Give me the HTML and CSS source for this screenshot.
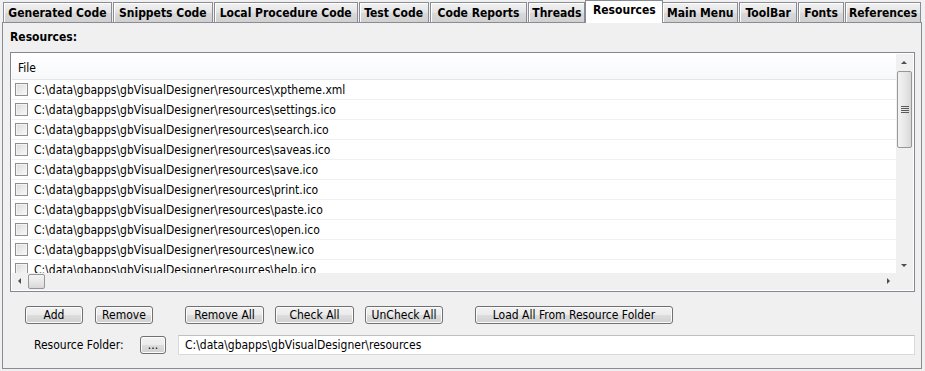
FILE: index.html
```html
<!DOCTYPE html>
<html>
<head>
<meta charset="utf-8">
<link rel="stylesheet" href="styles.css">
</head>
<body>
<div class="window">
  <div class="tabs">
    <div class="tab t1">Generated Code</div>
    <div class="tab t2">Snippets Code</div>
    <div class="tab t3">Local Procedure Code</div>
    <div class="tab t4">Test Code</div>
    <div class="tab t5">Code Reports</div>
    <div class="tab t6">Threads</div>
    <div class="tab active t7">Resources</div>
    <div class="tab t8">Main Menu</div>
    <div class="tab t9">ToolBar</div>
    <div class="tab t10">Fonts</div>
    <div class="tab t11">References</div>
  </div>
  <div class="panel">
    <div class="section-label">Resources:</div>
    <div class="listbox">
      <div class="list-main">
        <div class="list-content">
          <div class="list-header">File</div>
          <div class="rows">
            <div class="row"><span class="check"></span><span>C:\data\gbapps\gbVisualDesigner\resources\xptheme.xml</span></div>
            <div class="row"><span class="check"></span><span>C:\data\gbapps\gbVisualDesigner\resources\settings.ico</span></div>
            <div class="row"><span class="check"></span><span>C:\data\gbapps\gbVisualDesigner\resources\search.ico</span></div>
            <div class="row"><span class="check"></span><span>C:\data\gbapps\gbVisualDesigner\resources\saveas.ico</span></div>
            <div class="row"><span class="check"></span><span>C:\data\gbapps\gbVisualDesigner\resources\save.ico</span></div>
            <div class="row"><span class="check"></span><span>C:\data\gbapps\gbVisualDesigner\resources\print.ico</span></div>
            <div class="row"><span class="check"></span><span>C:\data\gbapps\gbVisualDesigner\resources\paste.ico</span></div>
            <div class="row"><span class="check"></span><span>C:\data\gbapps\gbVisualDesigner\resources\open.ico</span></div>
            <div class="row"><span class="check"></span><span>C:\data\gbapps\gbVisualDesigner\resources\new.ico</span></div>
            <div class="row"><span class="check"></span><span>C:\data\gbapps\gbVisualDesigner\resources\help.ico</span></div>
          </div>
        </div>
        <div class="vscroll">
          <svg class="arrow" width="16" height="16" viewBox="0 0 16 16"><path d="M5 10 L8 7 L11 10 Z" fill="#4d4d4d"/></svg>
          <div class="vtrack">
            <div class="vthumb">
              <svg width="8" height="7" viewBox="0 0 8 7"><path d="M0 0.5H8M0 2.5H8M0 4.5H8M0 6.5H8" stroke="#5a5a5a" stroke-width="1"/></svg>
            </div>
          </div>
          <svg class="arrow" width="16" height="16" viewBox="0 0 16 16"><path d="M5 7 L8 10 L11 7 Z" fill="#4d4d4d"/></svg>
        </div>
      </div>
      <div class="hscroll">
        <svg class="arrow" width="16" height="16" viewBox="0 0 16 16"><path d="M9 5 L6 8 L9 11 Z" fill="#4d4d4d"/></svg>
        <div class="htrack"><div class="hthumb"></div></div>
        <svg class="arrow" width="16" height="16" viewBox="0 0 16 16"><path d="M7 5 L10 8 L7 11 Z" fill="#4d4d4d"/></svg>
        <div class="corner"></div>
      </div>
    </div>
    <div class="buttons">
      <button class="btn b-add">Add</button>
      <button class="btn b-remove">Remove</button>
      <button class="btn b-removeall">Remove All</button>
      <button class="btn b-check">Check All</button>
      <button class="btn b-uncheck">UnCheck All</button>
      <button class="btn b-load">Load All From Resource Folder</button>
    </div>
    <div class="folder">
      <span class="folder-label">Resource Folder:</span>
      <button class="btn b-dots">...</button>
      <div class="textfield">C:\data\gbapps\gbVisualDesigner\resources</div>
    </div>
  </div>
</div>
</body>
</html>
```
FILE: styles.css
```css
* { box-sizing: border-box; }
html, body {
  margin: 0;
  padding: 0;
  background: #f0f0f0;
}
body {
  font-family: Tahoma, "DejaVu Sans Condensed", "Liberation Sans", sans-serif;
  font-size: 12px;
  color: #000;
  width: 925px;
  height: 371px;
  overflow: hidden;
}
.window {
  padding: 0 3px 0 2px;
}
.tabs {
  display: flex;
  align-items: flex-end;
  height: 22px;
  padding-left: 1px;
  position: relative;
  z-index: 2;
}
.tab {
  height: 20px;
  border: 1px solid #898c95;
  border-bottom: none;
  background: linear-gradient(#f2f2f2, #e3e3e3 50%, #d9d9d9 51%, #d0d0d0);
  font-weight: bold;
  font-size: 12px;
  line-height: 19px;
  padding-top: 1px;
  text-align: center;
  white-space: nowrap;
  overflow: hidden;
  margin-right: 1px;
  box-shadow: inset 1px 1px 0 #fff;
}
.tab.active {
  height: 23px;
  background: #fff;
  line-height: 18px;
  padding-top: 0;
  margin-left: -1px;
  margin-right: -1px;
  margin-bottom: -1px;
  box-shadow: none;
  position: relative;
}
.t1 { width: 109px; }
.t2 { width: 100px; }
.t3 { width: 144px; }
.t4 { width: 70px; }
.t5 { width: 98px; }
.t6 { width: 57px; }
.t7 { width: 78px; }
.t8 { width: 76px; }
.t9 { width: 58px; }
.t10 { width: 46px; }
.t11 { width: 76px; }

.panel {
  border: 1px solid #898c95;
  height: 347px;
  padding: 6px 6px 0 7px;
  background: #f0f0f0;
}
.section-label {
  font-weight: bold;
  height: 23px;
  line-height: 16px;
}
.listbox {
  border: 1px solid #828790;
  background: #fff;
  width: 905px;
  height: 240px;
  display: flex;
  flex-direction: column;
  padding: 1px;
}
.list-main {
  display: flex;
  flex: 1;
  min-height: 0;
}
.list-content {
  flex: 1;
  overflow: hidden;
  display: flex;
  flex-direction: column;
}
.list-header {
  height: 26px;
  line-height: 22px;
  padding-left: 6px;
  padding-top: 3px;
  font-size: 12px;
  background: linear-gradient(#fff, #f7f8fa);
  border-bottom: 1px solid #e5e5e5;
  flex: none;
}
.rows {
  overflow: hidden;
  flex: 1;
}
.row {
  height: 20px;
  display: flex;
  align-items: center;
  border-bottom: 1px solid #f0f0f0;
  padding-left: 3px;
  white-space: nowrap;
}
.check {
  width: 13px;
  height: 13px;
  border: 1px solid #8f8f8f;
  background: linear-gradient(135deg, #dcdcdc, #f8f8f8);
  box-shadow: inset 0 0 0 1px #f4f4f4;
  margin-right: 6px;
  flex: none;
}
.vscroll {
  width: 17px;
  display: flex;
  flex-direction: column;
  background: #f0f0f0;
  flex: none;
}
.arrow { flex: none; display: block; }
.vtrack {
  flex: 1;
  padding: 1px 1px 0;
}
.vthumb {
  height: 77px;
  border: 1px solid #979797;
  border-radius: 2px;
  background: linear-gradient(90deg, #f3f3f3, #e8e8e8 50%, #d8d8d8);
  display: flex;
  align-items: center;
  justify-content: center;
}
.vthumb svg { display: block; }
.hscroll {
  height: 17px;
  display: flex;
  background: #f0f0f0;
  flex: none;
}
.htrack {
  flex: 1;
  padding: 1px 0;
}
.hthumb {
  width: 17px;
  height: 15px;
  border: 1px solid #979797;
  border-radius: 2px;
  background: linear-gradient(#f3f3f3, #e8e8e8 50%, #d8d8d8);
}
.corner {
  width: 17px;
  background: #f0f0f0;
}
.buttons {
  display: flex;
  align-items: center;
  margin-top: 14px;
  padding-left: 15px;
  height: 18px;
}
.btn {
  font-family: inherit;
  font-size: 12px;
  height: 18px;
  padding: 0;
  border: 1px solid #707070;
  border-radius: 3px;
  background: linear-gradient(#f2f2f2, #ebebeb 50%, #dddddd 51%, #cfcfcf);
  color: #000;
  line-height: 15px;
  box-shadow: inset 0 0 0 1px #fbfbfb;
}
.b-add { width: 58px; }
.b-remove { width: 58px; margin-left: 12px; }
.b-removeall { width: 79px; margin-left: 32px; }
.b-check { width: 79px; margin-left: 11px; }
.b-uncheck { width: 78px; margin-left: 11px; }
.b-load { width: 198px; margin-left: 32px; }
.folder {
  display: flex;
  align-items: center;
  margin-top: 11px;
  height: 20px;
}
.folder-label {
  margin-left: 24px;
  width: 106px;
}
.b-dots {
  width: 26px;
  height: 18px;
  line-height: 12px;
}
.textfield {
  margin-left: 12px;
  width: 737px;
  height: 20px;
  border: 1px solid #d9d9d9;
  border-top-color: #c0c0c0;
  background: #fff;
  line-height: 18px;
  padding-left: 6px;
}
```
